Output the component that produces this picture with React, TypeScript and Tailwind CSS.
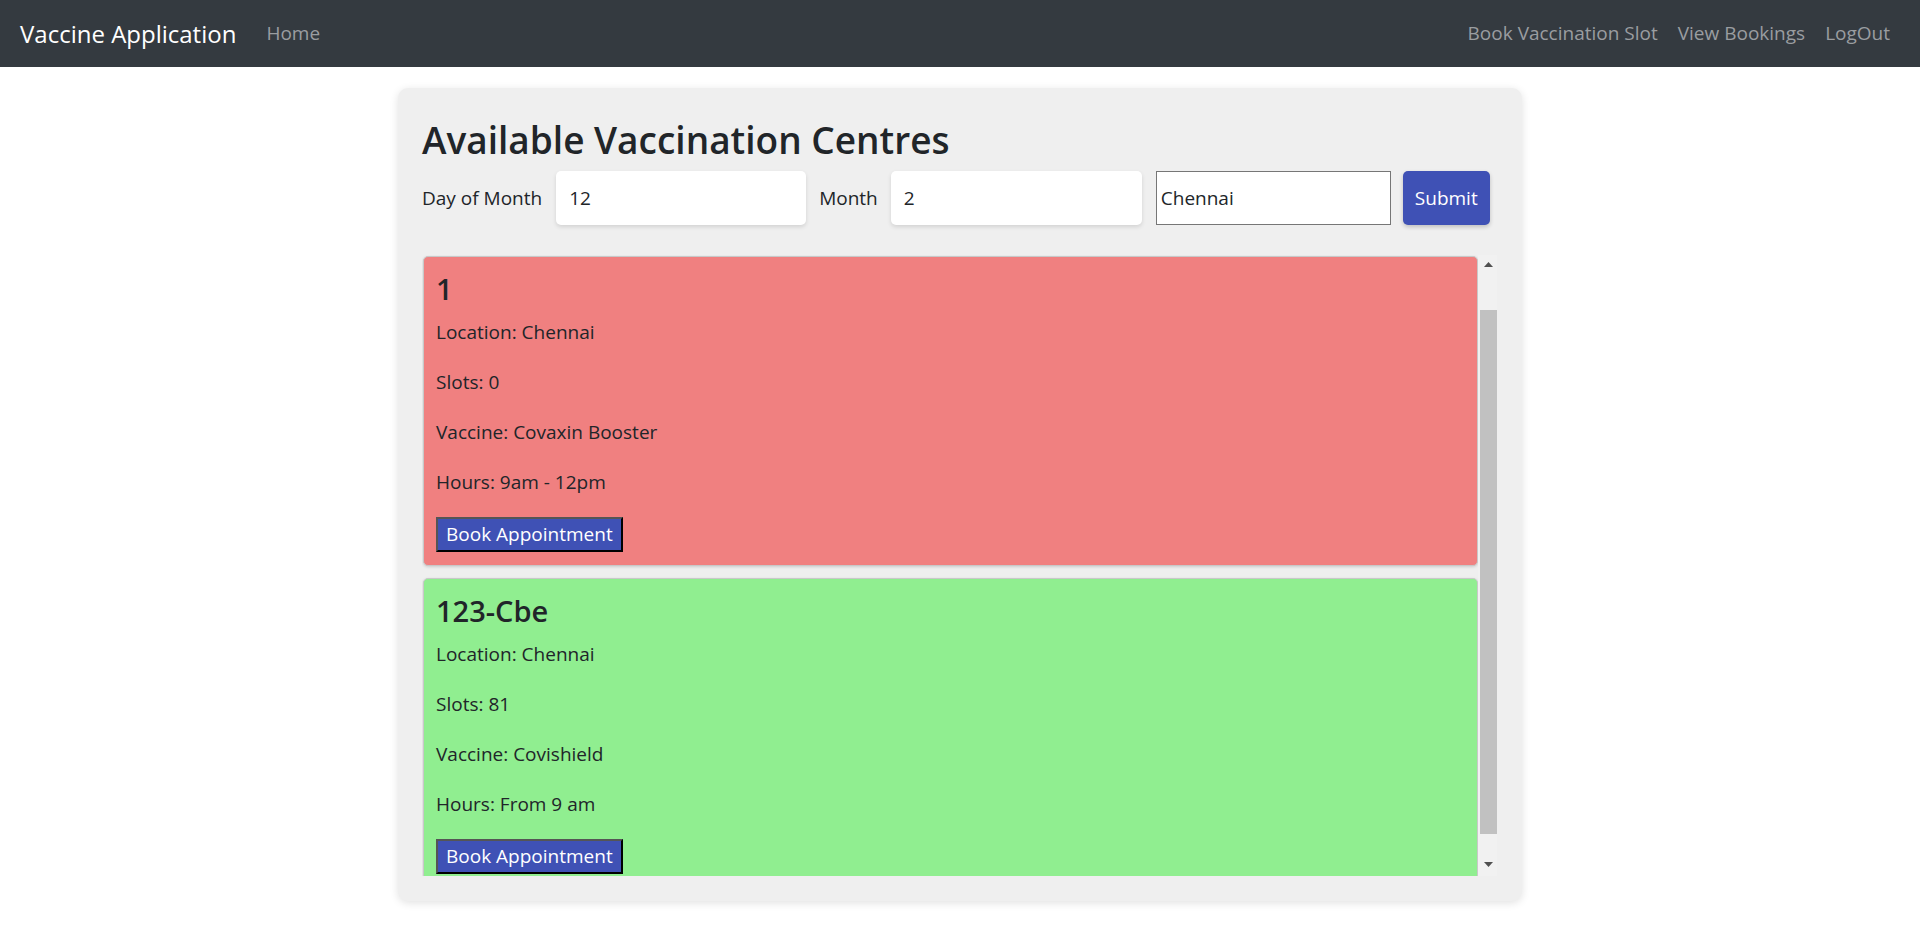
import React from 'react';

const centres = [
  { name: '1', location: 'Chennai', slots: 0, vaccine: 'Covaxin Booster', hours: '9am - 12pm' },
  { name: '123-Cbe', location: 'Chennai', slots: 81, vaccine: 'Covishield', hours: 'From 9 am' },
];

function CentreCard({ c }: { c: (typeof centres)[number] }) {
  const bg = c.slots > 0 ? 'bg-[#90ee90]' : 'bg-[#f08080]';
  return (
    <div className={`${bg} rounded-[5px] border border-[#c8c8c8] px-[12px] pt-[14px] pb-[13px] shadow-[0_1px_3px_rgba(0,0,0,0.15)]`}>
      <h4 className="mb-[10px] text-[29px] leading-[36px] font-semibold text-[#212529]">{c.name}</h4>
      <p className="mb-[20px] leading-[30px]">Location: {c.location}</p>
      <p className="mb-[20px] leading-[30px]">Slots: {c.slots}</p>
      <p className="mb-[20px] leading-[30px]">Vaccine: {c.vaccine}</p>
      <p className="mb-[20px] leading-[30px]">Hours: {c.hours}</p>
      <button className="h-[35px] bg-[#3f51b5] px-[8px] text-white leading-[29px] border-2 border-t-[#555] border-l-[#555] border-r-black border-b-black">
        Book Appointment
      </button>
    </div>
  );
}

// fake classic scrollbar, drawn the way the screenshot shows it
function Scrollbar() {
  return (
    <div className="flex h-full w-[19px] flex-col bg-[#f1f1f1] pl-[2px]">
      <div className="flex h-[17px] justify-center pt-[7px]">
        <svg width="9" height="5" viewBox="0 0 9 5">
          <polygon points="4.5,0 9,5 0,5" fill="#505050" />
        </svg>
      </div>
      <div className="h-[38px]" />
      <div className="h-[524px] w-[17px] bg-[#c1c1c1]" />
      <div className="flex flex-1 items-end justify-center pb-[9px]">
        <svg width="9" height="5" viewBox="0 0 9 5">
          <polygon points="0,0 9,0 4.5,5" fill="#505050" />
        </svg>
      </div>
    </div>
  );
}

export default function App() {
  return (
    <div className="min-h-[942px] bg-white font-['Open_Sans','Noto_Sans',sans-serif] text-[19px] text-[#212529]">
      <nav className="flex h-[67px] items-center justify-between bg-[#343a40] px-[20px]">
        <div className="flex items-center">
          <span className="mr-[20px] text-[24px] text-white">Vaccine Application</span>
          <a className="px-[10px] text-[19px] text-[#9a9da0]">Home</a>
        </div>
        <div className="flex items-center text-[19px] text-[#9a9da0]">
          <a className="px-[10px]">Book Vaccination Slot</a>
          <a className="px-[10px]">View Bookings</a>
          <a className="px-[10px]">LogOut</a>
        </div>
      </nav>

      <main className="flex justify-center pt-[21px]">
        <div className="w-[1124px] rounded-[10px] bg-[#efefef] px-[24px] pt-[28px] pb-[25px] shadow-[0_2px_8px_rgba(0,0,0,0.12)]">
          <h2 className="mb-[7px] text-[37px] leading-[48px] font-semibold">Available Vaccination Centres</h2>
          <div className="mb-[30px] flex h-[54px] items-center">
            <label className="mr-[14px]">Day of Month</label>
            <input
              defaultValue="12"
              className="h-[54px] w-[250px] rounded-[5px] bg-white px-[13px] shadow-[0_2px_4px_rgba(0,0,0,0.12)] outline-none"
            />
            <label className="ml-[13px] mr-[13px]">Month</label>
            <input
              defaultValue="2"
              className="h-[54px] w-[251px] rounded-[5px] bg-white px-[13px] shadow-[0_2px_4px_rgba(0,0,0,0.12)] outline-none"
            />
            <input
              defaultValue="Chennai"
              className="ml-[14px] h-[54px] w-[235px] border border-[#767676] bg-white px-[4px] outline-none"
            />
            <button className="ml-[12px] h-[54px] w-[87px] rounded-[5px] bg-[#3f51b5] text-white shadow-[0_2px_4px_rgba(0,0,0,0.2)]">
              Submit
            </button>
          </div>
          <div className="flex h-[621px] w-[1075px]">
            <div className="flex-1 overflow-hidden pl-[1px] pt-[1px]">
              <div className="flex flex-col gap-[12px]">
                {centres.map((c) => (
                  <CentreCard key={c.name} c={c} />
                ))}
              </div>
            </div>
            <Scrollbar />
          </div>
        </div>
      </main>
    </div>
  );
}
